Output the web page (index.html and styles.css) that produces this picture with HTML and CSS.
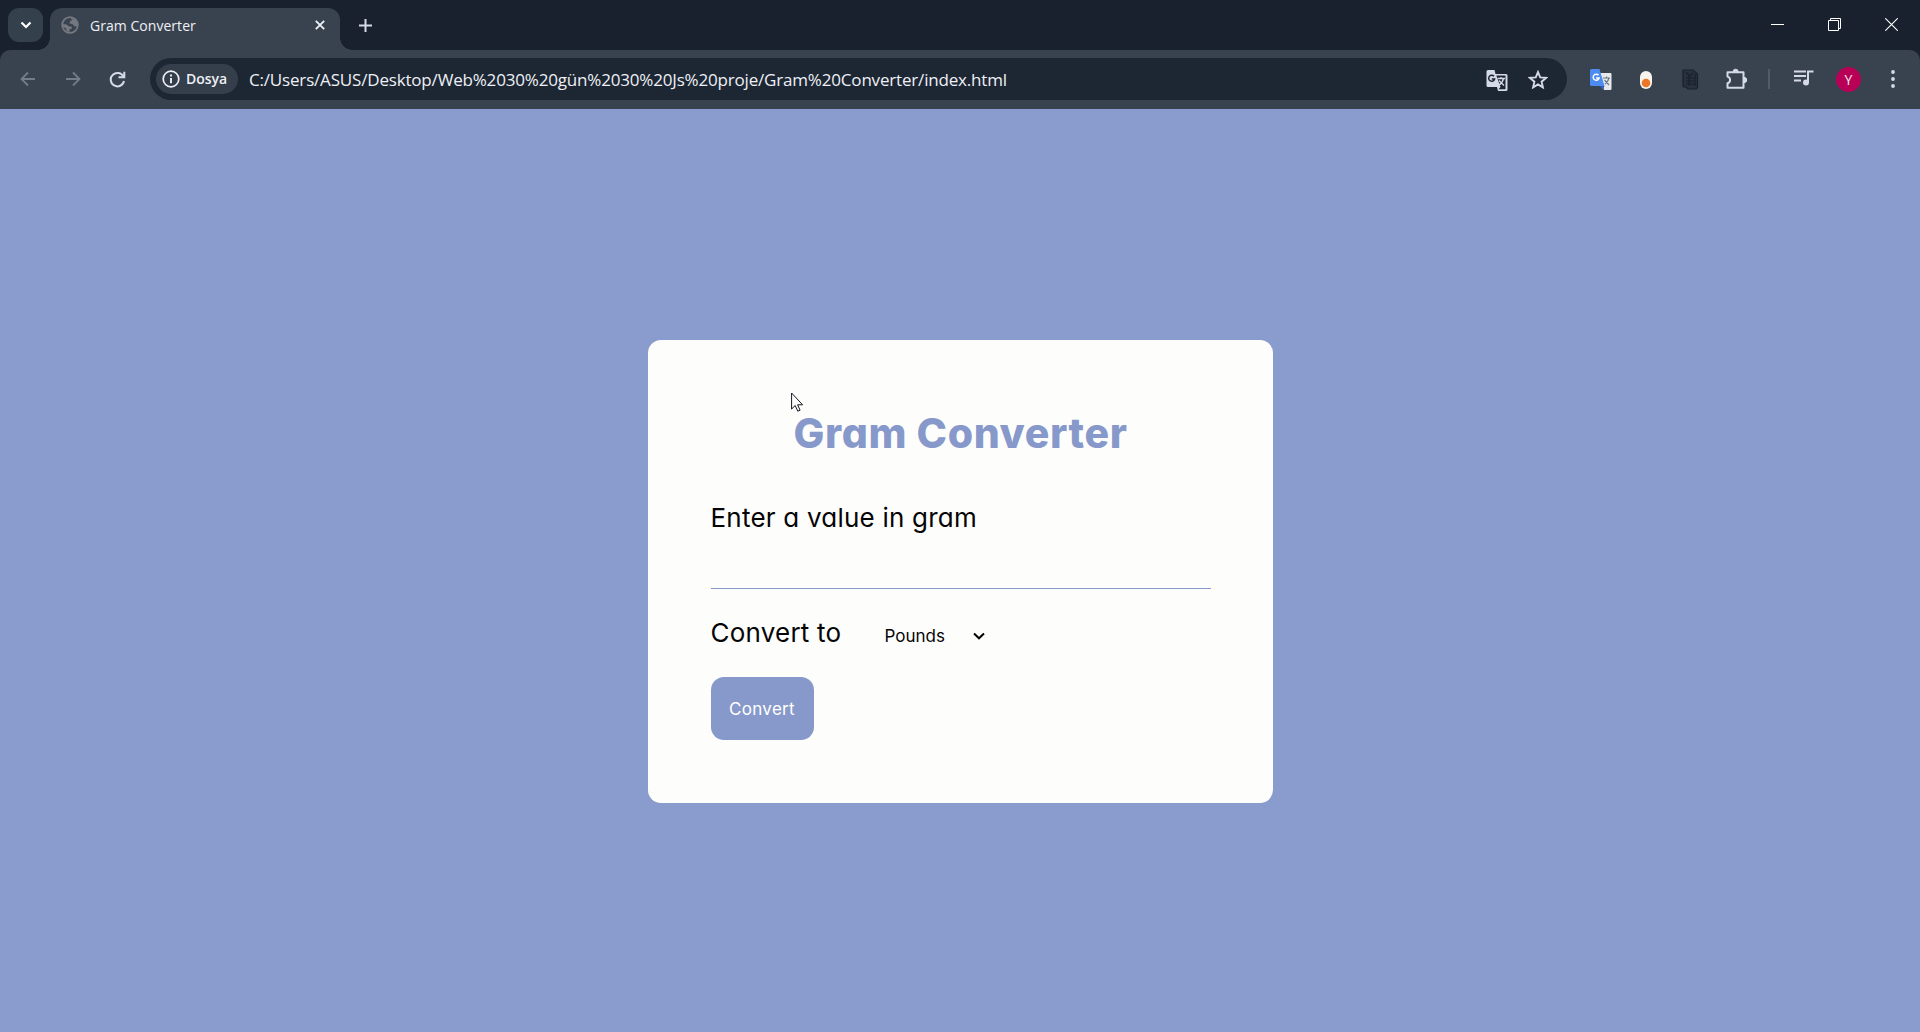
FILE: index.html
```html
<!DOCTYPE html>
<html lang="tr">
<head>
<meta charset="utf-8">
<title>Gram Converter</title>
<link rel="stylesheet" href="styles.css">
</head>
<body>
<div class="window">
  <header class="tabstrip">
    <button class="tab-search" aria-label="Search tabs"><svg width="12" height="8" viewBox="0 0 12 8"><path d="M1.500 1.500 6 6l4.500-4.500" fill="none" stroke="#fff" stroke-width="2.200"/></svg></button>
    <div class="tab">
      <svg class="globe" width="18" height="18" viewBox="0 0 18 18"><circle cx="9" cy="9" r="7.800" fill="none" stroke="#767880" stroke-width="1.800"/><path d="M9.500 1.500 16 5l.5 5-3 .5-2-2.500-3-.5.5-2L11 4zM1.500 8l4 .5L8 10.500h2.500l.5 2-2.500 1V16L6 15.500l-1-3-3.500-2z" fill="#767880"/></svg>
      <span class="tab-title">Gram Converter</span>
      <svg width="10" height="10" viewBox="0 0 10 10"><path d="m.8.8 8.400 8.400M9.200.8.800 9.200" stroke="#f0f2f7" stroke-width="1.800"/></svg>
    </div>
    <button class="new-tab" aria-label="New tab"><svg width="13" height="13" viewBox="0 0 13 13"><path d="M6.500 0v13M0 6.500h13" stroke="#d5dae6" stroke-width="2"/></svg></button>
    <div class="window-controls">
      <svg width="13" height="13" viewBox="0 0 13 13"><path d="M0 6.500h13" stroke="#fff"/></svg>
      <svg width="13" height="13" viewBox="0 0 13 13"><path d="M.5 2.500h10v10H.5zM2.500 2.500v-2h10v10h-2" fill="none" stroke="#fff"/></svg>
      <svg width="13" height="13" viewBox="0 0 13 13"><path d="m.3.300 12.400 12.400M12.700.300.300 12.700" stroke="#fff" stroke-width="1.100"/></svg>
    </div>
  </header>
  <nav class="toolbar">
    <div class="nav-buttons">
      <svg width="16" height="16" viewBox="0 0 16 16"><path d="M15 8H2M8 1.500 1.500 8 8 14.500" fill="none" stroke="#747b89" stroke-width="1.800"/></svg>
      <svg width="16" height="16" viewBox="0 0 16 16"><path d="M1 8h13M8 1.500 14.500 8 8 14.500" fill="none" stroke="#747b89" stroke-width="1.800"/></svg>
      <svg width="17" height="17" viewBox="0 0 17 17"><path d="M14.500 5.800A6.700 6.700 0 1 0 15 10M15.300.8v5.500H9.500" fill="none" stroke="#d5dae6" stroke-width="2"/></svg>
    </div>
    <div class="omnibox">
      <div class="chip"><svg width="18" height="18" viewBox="0 0 18 18"><circle cx="9" cy="9" r="7.800" fill="none" stroke="#eef0f6" stroke-width="1.700"/><path d="M9 8v5.200M9 4.600v2" stroke="#eef0f6" stroke-width="1.900"/></svg><span class="chip-label">Dosya</span></div>
      <span class="url">C:/Users/ASUS/Desktop/Web%2030%20gün%2030%20Js%20proje/Gram%20Converter/index.html</span>
      <div class="omnibox-actions">
        <svg width="22" height="21" viewBox="0 0 22 21"><path d="M2 0h6.500l1 4H20q1.500 0 1.500 1.500v14q0 1.500-1.500 1.500h-8l-1-4H2Q.5 17 .5 15.500v-14Q.5 0 2 0z" fill="#d5dae6"/><path d="M10.300 5.500h9.200v13.800h-7l2-2.300z" fill="#1d2733"/><path d="M8 6.300a3 3 0 1 0 .6 2.700H5.800" fill="none" stroke="#1d2733" stroke-width="1.500"/><path d="M11.500 8.500h7.500M15 7v1.500M17.500 8.500q-1 4.500-4.500 6.500M13 10.500l5 5" fill="none" stroke="#d5dae6" stroke-width="1.300"/></svg>
        <svg class="star" width="20" height="19" viewBox="0 0 20 19"><path d="m10 2 2.200 5.400 5.800.5-4.400 3.800 1.300 5.700-4.900-3-4.900 3 1.300-5.700L2 7.900l5.800-.5z" fill="none" stroke="#d5dae6" stroke-width="1.900"/></svg>
      </div>
    </div>
    <div class="extensions">
      <svg class="ext-translate" width="22" height="22" viewBox="0 0 22 22"><path d="M10 4h10.500q1 0 1 1v15q0 1-1 1H14z" fill="#e6e8eb"/><path d="M1.500 0h8l5 17H1.500Q0 17 0 15.500v-14Q0 0 1.500 0z" fill="#4c8bf0"/><path d="M10 17h4.500l-2 4z" fill="#3159bd"/><path d="M8.500 6.300a3 3 0 1 0 .6 2.700H6" fill="none" stroke="#fff" stroke-width="1.500"/><path d="M13 9h7M16.500 7.500V9M19 9q-1 4-4 6M14.500 11l4.500 5" fill="none" stroke="#697785" stroke-width="1.200"/></svg>
      <svg class="ext-toggle" width="12" height="18" viewBox="0 0 12 18"><rect width="12" height="18" rx="6" fill="#f7f3ed"/><circle cx="6" cy="12" r="4.300" fill="#ed7625"/></svg>
      <svg class="ext-pages" width="17" height="21" viewBox="0 0 17 21"><path d="M2 1h9l4.500 4v13.500l-1.500 1.500H6l-2-2H2q-1 0-1-1V2q0-1 1-1z" fill="#28313c" stroke="#18212b" stroke-width="1.200"/><path d="M4 3.500 8 7l3-3M4 9h8M4 12h8M4 15h8M7 7v10M13 5v12" fill="none" stroke="#18212b" stroke-width="1.200"/></svg>
      <svg class="ext-menu" width="22" height="22" viewBox="0 0 22 22"><path d="M1.500 4.200h16v15.600h-16v-4.600a3.400 3.400 0 0 0 0-6.600z" fill="none" stroke="#d5dae6" stroke-width="2" stroke-linejoin="round"/><path d="M7 3.800a2.600 2.600 0 0 1 5.200 0zM18 9.300a2.700 2.700 0 0 1 0 5.400z" fill="#d5dae6" stroke="#d5dae6"/></svg>
      <span class="divider"></span>
      <svg class="media" width="20" height="16" viewBox="0 0 20 16"><path d="M0 1.500h12M0 6h12M0 10.500h7" stroke="#d5dae6" stroke-width="2"/><path d="M14 12V1.500h5.500" fill="none" stroke="#d5dae6" stroke-width="2"/><circle cx="12" cy="12.500" r="3" fill="#d5dae6"/></svg>
      <span class="avatar">Y</span>
      <svg class="more" width="4" height="18" viewBox="0 0 4 18"><g fill="#d5dae6"><circle cx="2" cy="2" r="1.900"/><circle cx="2" cy="9" r="1.900"/><circle cx="2" cy="16" r="1.900"/></g></svg>
    </div>
  </nav>
  <main class="page">
    <section class="card">
      <h1 class="title"><span>Gram Converter</span></h1>
      <label class="label" for="grams"><span class="label-value">Enter a value in gram</span></label>
      <input class="amount" id="grams" type="text">
      <div class="unit-row">
        <span class="label label-unit">Convert to</span>
        <div class="select"><span class="unit">Pounds</span><svg width="12" height="8" viewBox="0 0 12 8"><path d="m1 1.500 5 4.800 5-4.800" fill="none" stroke="#000" stroke-width="2"/></svg></div>
      </div>
      <button class="convert"><span>Convert</span></button>
      <svg class="cursor" width="13" height="20" viewBox="0 0 13 20"><path d="M.6 1v16l3.600-3.500 2.600 5.700 2.300-1-2.500-5.400h5z" fill="#fff" stroke="#14161f"/></svg>
    </section>
  </main>
</div>
</body>
</html>
```
FILE: styles.css
```css
* { box-sizing: border-box; }
body { margin: 0; font-family: "Open Sans", "Noto Sans", sans-serif; }
button { border: 0; padding: 0; font: inherit; }
svg { display: block; flex: none; }
.window { height: 1032px; display: flex; flex-direction: column; overflow: hidden; background: #18212d; }
.tabstrip { height: 50px; display: flex; align-items: flex-start; padding: 8px 22px 0 8px; }
.tab-search { width: 35px; height: 34px; border-radius: 11px; background: #35404d; display: grid; place-items: center; }
.tab { position: relative; width: 290px; height: 42px; margin-left: 7px; padding: 0 15px 8px 11px; border-radius: 12px 12px 0 0; background: #394350; display: flex; align-items: center; }
.tab::before, .tab::after { content: ""; position: absolute; bottom: 0; width: 12px; height: 12px; }
.tab::before { left: -12px; background: radial-gradient(circle at 0 0, transparent 11.500px, #394350 12px); }
.tab::after { right: -12px; background: radial-gradient(circle at 100% 0, transparent 11.500px, #394350 12px); }
.tab-title { flex: 1; margin-left: 11px; padding-top: 2px; font-size: 14px; line-height: 20px; letter-spacing: .04px; color: #eef0f6; }
.new-tab { width: 13px; height: 34px; margin-left: 19px; background: none; display: grid; place-items: center; }
.window-controls { flex: 1; height: 33px; display: flex; justify-content: flex-end; align-items: center; gap: 44px; }
.toolbar { height: 59px; background: #394350; border-radius: 10px 10px 0 0; display: flex; align-items: center; padding: 0 25px 1px 20px; }
.nav-buttons { display: flex; align-items: center; gap: 28.500px; width: 130px; }
.omnibox { width: 1417px; height: 42px; border-radius: 21px; background: #1d2733; display: flex; align-items: center; padding: 0 19px 0 6px; }
.chip { width: 82px; height: 30px; border-radius: 15px; background: #353f4c; display: flex; align-items: center; padding-left: 6px; gap: 6px; }
.chip-label { padding-bottom: 1px; font-size: 14px; font-weight: 600; color: #eef0f6; }
.url { margin-left: 11px; padding-top: 2px; font-size: 17px; line-height: 24px; letter-spacing: -.18px; color: #eef0f6; white-space: nowrap; }
.omnibox-actions { margin-left: auto; padding-top: 2px; display: flex; align-items: center; gap: 20px; }
.star { margin-bottom: 2px; }
.extensions { flex: 1; display: flex; align-items: center; padding-left: 23px; }
.ext-translate { margin-top: 2px; }
.ext-toggle { margin-left: 28px; margin-top: 1px; }
.ext-pages { margin-left: 30px; margin-top: 1px; }
.ext-menu { margin-left: 27px; }
.divider { width: 2px; height: 20px; margin-left: 20px; background: #525b69; }
.media { margin-left: 24px; margin-bottom: 2px; }
.avatar { width: 25px; height: 25px; margin-left: 22px; border-radius: 50%; background: #b80056; color: #f5e9ef; display: grid; place-items: center; font-size: 14px; }
.more { margin-left: 30px; }
.page { flex: 1; background: #8a9ccd; display: flex; justify-content: center; align-items: flex-start; padding-top: 231px; font-family: Inter, "Open Sans", sans-serif; font-feature-settings: "cv11"; }
.card { position: relative; width: 625px; height: 463px; padding: 63px 62px 0 63px; background: #fdfdfc; border-radius: 13px; display: flex; flex-direction: column; align-items: flex-start; color: #050505; }
.title { align-self: center; margin: 0; font-size: 41px; line-height: 60px; letter-spacing: .6px; color: #8799ca; font-weight: 800; white-space: nowrap; }
.label { font-size: 26px; line-height: 38px; letter-spacing: .22px; white-space: nowrap; }
label.label { margin-top: 36px; }
.amount { width: 500px; height: 39px; margin-top: 13px; border: 0; border-bottom: 1px solid #8799ca; background: transparent; outline: 0; }
.unit-row { height: 46px; margin-top: 21px; display: flex; align-items: center; }
.label-unit { width: 174px; }
.select { width: 100px; padding-top: 5px; display: flex; align-items: center; justify-content: space-between; font-size: 17px; line-height: 24px; }
.convert { width: 103px; height: 63px; margin-top: 21px; border-radius: 13px; background: #8799ca; color: #fff; font-size: 17px; line-height: 24px; letter-spacing: .3px; }
.cursor { position: absolute; left: 143px; top: 52px; }
```
